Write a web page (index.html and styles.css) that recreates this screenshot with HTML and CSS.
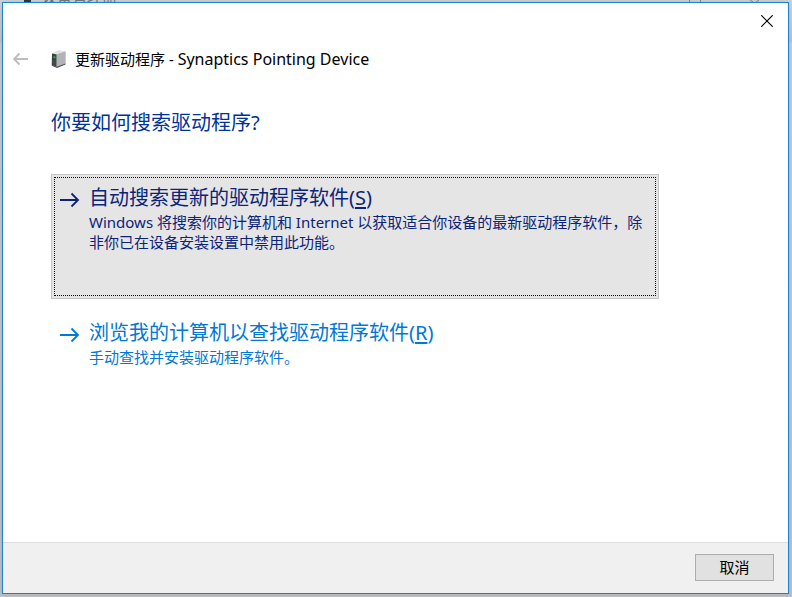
FILE: index.html
```
<!DOCTYPE html>
<html lang="zh-CN">
<head>
<meta charset="utf-8">
<title>更新驱动程序</title>
<link rel="stylesheet" href="styles.css">
</head>
<body>
<div class="backdrop" aria-hidden="true">
  <svg class="backdrop-icon" width="8" height="2" viewBox="0 0 8 2"><path d="M0 0h7v2H0z" fill="#33363a"/></svg>
  <span class="backdrop-title">设备管理器</span>
  <svg class="backdrop-controls" width="84" height="2" viewBox="0 0 84 2"><path d="M3.500 0v2M14.500 0v2M64 0l3 2M73 0l-3 2" stroke="#85878b" fill="none"/></svg>
</div>
<main class="dialog">
  <div class="caption">
    <button class="close" type="button" aria-label="关闭">
      <svg width="12" height="12" viewBox="0 0 12 12"><path d="M.3.3l11.400 11.400M11.700.3L.3 11.700" stroke="#000" stroke-width="1.200"/></svg>
    </button>
  </div>
  <header class="header">
    <button class="back" type="button" aria-label="返回" disabled>
      <svg width="16" height="14" viewBox="0 0 16 14"><path d="M1 7H15M6.500 1.500L1 7l5.500 5.500" fill="none" stroke="#bdbdbd" stroke-width="1.900"/></svg>
    </button>
    <svg class="device" width="16" height="18" viewBox="0 0 16 18">
      <path d="M1 3.500L7.500.5 14.500 1.500v12.300L7 17.500.8 15.500z" fill="#c8c9cd"/>
      <path d="M1 3.500L7.500.5 14.500 1.500 5.500 4.500z" fill="#dfe0e4"/>
      <path d="M5.500 4.500l9-3v12.300L6 17z" fill="#b2b3b7"/>
      <path d="M1 3.500l4.500 1v12.300l-4.700-2z" fill="#3b3d40"/>
      <path d="M1.500 9.500l3.500.8v5l-3.500-1.500z" fill="#46494b"/>
      <path d="M2.500 6l2 .4v2.100l-2-.4z" fill="#22b62d"/>
      <path d="M.8 14.800L6 16.800l8.500-3.200v1L6 18l-5.200-2.200z" fill="#494b4e"/>
    </svg>
    <span class="name">更新驱动程序 - <span class="product">Synaptics Pointing Device</span></span>
  </header>
  <section class="content">
    <h1>你要如何搜索驱动程序?</h1>
    <button class="command selected" type="button">
      <svg class="arrow" width="20" height="16" viewBox="0 0 20 16"><path d="M0 8h18M11.500 1.500L18 8l-6.500 6.500" fill="none" stroke="currentColor" stroke-width="1.800"/></svg>
      <span class="copy">
        <span class="label">自动搜索更新的驱动程序软件(<u>S</u>)</span>
        <span class="note">Windows 将搜索你的计算机和 Internet 以获取适合你设备的最新驱动程序软件，除非你已在设备安装设置中禁用此功能。</span>
      </span>
    </button>
    <button class="command" type="button">
      <svg class="arrow" width="20" height="16" viewBox="0 0 20 16"><path d="M0 8h18M11.500 1.500L18 8l-6.500 6.500" fill="none" stroke="currentColor" stroke-width="1.800"/></svg>
      <span class="copy">
        <span class="label">浏览我的计算机以查找驱动程序软件(<u>R</u>)</span>
        <span class="note">手动查找并安装驱动程序软件。</span>
      </span>
    </button>
  </section>
  <footer class="footer">
    <button class="cancel" type="button">取消</button>
  </footer>
</main>
</body>
</html>
```
FILE: styles.css
```
* {
  box-sizing: border-box;
}

body {
  margin: 0;
  min-height: 100vh;
  padding: 2px 3px 3px 2px;
  display: flex;
  background: linear-gradient(#d2d3d5 0, #bfc1c8 42px, #cbccd1 43px, #bec0c6 100%);
  font-family: "Noto Sans", "Noto Sans CJK SC", sans-serif;
  font-size: 15px;
  line-height: 20px;
}

button {
  font: inherit;
  color: inherit;
  padding: 0;
  border: 0;
  background: none;
}

svg {
  display: block;
  flex: none;
}

/* Sliver of the parent window showing above the dialog */
.backdrop {
  position: absolute;
  top: 0;
  left: 0;
  right: 0;
  height: 2px;
  overflow: hidden;
  display: flex;
  align-items: flex-end;
  padding: 0 22px 0 24px;
  color: #77797d;
}

.backdrop-title {
  margin: 0 auto -4px 10px;
}

.dialog {
  position: relative;
  flex: 1;
  display: flex;
  flex-direction: column;
  border: 1px solid #1883d7;
  background: #fff;
  box-shadow: 0 0 4px rgba(0, 0, 0, 0.15);
}

.caption {
  display: flex;
  justify-content: flex-end;
  height: 36px;
}

.close {
  width: 42px;
  display: flex;
  align-items: center;
  justify-content: center;
}

.header {
  display: flex;
  align-items: center;
  height: 40px;
  padding-left: 10px;
  color: #000;
}

.device {
  margin: 0 8px 0 22px;
}

.product {
  font-size: 16px;
}

.content {
  flex: 1;
  padding: 28px 129px 28px 48px;
}

h1 {
  margin: 0 0 36px;
  font-size: 20px;
  line-height: 31px;
  font-weight: 400;
  color: #003399;
}

.command {
  width: 100%;
  display: flex;
  align-items: flex-start;
  gap: 9px;
  margin-bottom: 10px;
  padding: 9px 8px 8px;
  border: 1px solid transparent;
  text-align: left;
  color: #0078d7;
}

.selected {
  min-height: 125px;
  border-color: #c4c4c4;
  outline: 1px dotted #000;
  outline-offset: -4px;
  background: #e5e5e5;
  color: #0b2479;
}

.arrow {
  margin-top: 8px;
}

.copy {
  flex: 1;
  min-width: 0;
}

.label,
.note {
  display: block;
}

.label {
  font-size: 20px;
  line-height: 28px;
}

.label u {
  text-underline-offset: 2px;
}

.footer {
  display: flex;
  justify-content: flex-end;
  padding: 11px 14px 12px;
  border-top: 1px solid #dfdfdf;
  background: #f0f0f0;
}

.cancel {
  width: 79px;
  height: 27px;
  padding-bottom: 2px;
  border: 1px solid #adadad;
  background: #e1e1e1;
  color: #000;
}
```
